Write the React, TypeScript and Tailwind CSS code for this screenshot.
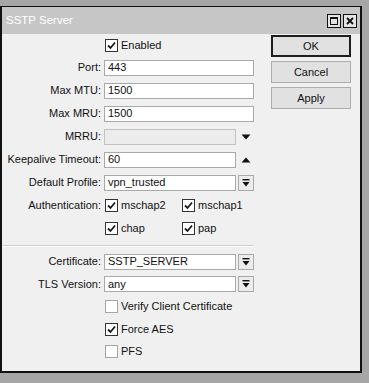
import React from 'react'

const Check = ({ on }: { on: boolean }) => (
  <div
    className={`w-[13px] h-[13px] bg-white border flex items-center justify-center ${
      on ? 'border-[#333333]' : 'border-[#a5a5a5]'
    }`}
  >
    {on && (
      <svg width="9" height="9" viewBox="0 0 9 9">
        <polyline points="1,4.5 3.5,7 8,1.5" fill="none" stroke="#1a1a1a" strokeWidth="1.8" />
      </svg>
    )}
  </div>
)

const CheckItem = ({ on, text, w = '' }: { on: boolean; text: string; w?: string }) => (
  <div className={`flex items-center ml-[1px] ${w}`}>
    <Check on={on} />
    <span className="ml-[3px]">{text}</span>
  </div>
)

const Row = ({ label = '', h = 'h-[23px]', children }: { label?: string; h?: string; children: React.ReactNode }) => (
  <div className={`flex items-center ${h}`}>
    <div className="w-[99px] text-right whitespace-nowrap">{label}</div>
    <div className="ml-[3px] flex items-center">{children}</div>
  </div>
)

const Field = ({ value, w = 'w-[150px]', disabled = false }: { value: string; w?: string; disabled?: boolean }) => (
  <div
    className={`${w} h-[16px] border flex items-center pl-[3px] ${
      disabled ? 'bg-[#ececec] border-[#c2c2c2]' : 'bg-white border-[#a9a9a9]'
    }`}
  >
    {value}
  </div>
)

const DropBtn = () => (
  <div className="w-[16px] h-[16px] ml-[2px] border border-[#a9a9a9] bg-[#ececec] flex items-center justify-center">
    <svg width="8" height="8" viewBox="0 0 8 8">
      <rect x="0.5" y="0" width="7" height="1.4" fill="#111" />
      <polygon points="0.5,3 7.5,3 4,7.5" fill="#111" />
    </svg>
  </div>
)

const Arrow = ({ up = false }: { up?: boolean }) => (
  <div className="w-[16px] h-[16px] ml-[2px] flex items-center justify-center">
    <svg width="10" height="6" viewBox="0 0 10 6">
      {up ? <polygon points="0.5,5.5 9.5,5.5 5,0.5" fill="#111" /> : <polygon points="0.5,0.5 9.5,0.5 5,5.5" fill="#111" />}
    </svg>
  </div>
)

const Btn = ({ text, main = false }: { text: string; main?: boolean }) => (
  <div
    className={`w-[80px] h-[22px] bg-[#e1e1e1] flex items-center justify-center ${
      main ? 'border-2 border-[#1e1e1e]' : 'border border-[#adadad]'
    }`}
  >
    {text}
  </div>
)

export default function App() {
  return (
    <div className="w-[369px] h-[383px] bg-[#a6a6a6] pt-[6px] font-['Liberation_Sans',Arial,sans-serif] text-[11px] text-[#111] overflow-hidden">
      <div className="w-[362px] h-[367px] border-t border-x-2 border-b-2 border-[#111] flex flex-col">
        {/* title bar */}
        <div className="h-[27px] bg-[#c6c6c6] flex items-center pl-[4px] pr-[3px]">
          <span className="text-white text-[11.5px]">SSTP Server</span>
          <div className="ml-auto flex gap-[2px]">
            <div className="w-[14px] h-[14px] border border-[#111] bg-[#e4e4e4] flex items-center justify-center">
              <div className="w-[8px] h-[8px] border border-[#111] border-t-2"></div>
            </div>
            <div className="w-[14px] h-[14px] border border-[#111] bg-[#e4e4e4] flex items-center justify-center">
              <svg width="8" height="8" viewBox="0 0 8 8">
                <path d="M1 1 L7 7 M7 1 L1 7" stroke="#111" strokeWidth="1.8" />
              </svg>
            </div>
          </div>
        </div>

        {/* body */}
        <div className="flex-1 bg-[#f0f0f0] flex">
          <div className="w-[260px] flex flex-col">
            <div className="flex items-center h-[22px]">
              <div className="w-[99px]"></div>
              <div className="ml-[3px]">
                <CheckItem on text="Enabled" />
              </div>
            </div>
            <Row label="Port:">
              <Field value="443" />
            </Row>
            <Row label="Max MTU:">
              <Field value="1500" />
            </Row>
            <Row label="Max MRU:">
              <Field value="1500" />
            </Row>
            <Row label="MRRU:">
              <Field value="" w="w-[132px]" disabled />
              <Arrow />
            </Row>
            <Row label="Keepalive Timeout:">
              <Field value="60" w="w-[132px]" />
              <Arrow up />
            </Row>
            <Row label="Default Profile:">
              <Field value="vpn_trusted" w="w-[132px]" />
              <DropBtn />
            </Row>
            <Row label="Authentication:">
              <CheckItem on text="mschap2" w="w-[76px]" />
              <CheckItem on text="mschap1" />
            </Row>
            <Row>
              <CheckItem on text="chap" w="w-[76px]" />
              <CheckItem on text="pap" />
            </Row>

            {/* separator */}
            <div className="h-[10px] pt-[5px]">
              <div className="w-[252px] border-t border-[#cfcfcf] border-b border-b-white"></div>
            </div>

            <Row label="Certificate:">
              <Field value="SSTP_SERVER" w="w-[132px]" />
              <DropBtn />
            </Row>
            <Row label="TLS Version:" h="h-[22px]">
              <Field value="any" w="w-[132px]" />
              <DropBtn />
            </Row>
            <Row>
              <CheckItem on={false} text="Verify Client Certificate" />
            </Row>
            <Row h="h-[22px]">
              <CheckItem on text="Force AES" />
            </Row>
            <Row>
              <CheckItem on={false} text="PFS" />
            </Row>
          </div>

          <div className="ml-[9px] pt-[1px] flex flex-col gap-[4px]">
            <Btn text="OK" main />
            <Btn text="Cancel" />
            <Btn text="Apply" />
          </div>
        </div>
      </div>
    </div>
  )
}
